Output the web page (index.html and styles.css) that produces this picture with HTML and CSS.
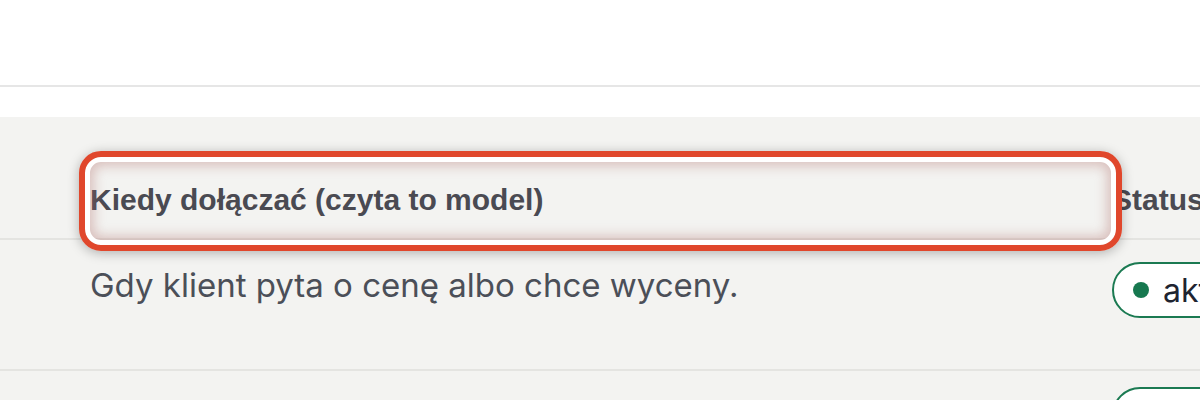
FILE: index.html
```html
<!DOCTYPE html>
<html lang="pl">
<head>
<meta charset="utf-8">
<title>Reguły</title>
<link rel="stylesheet" href="styles.css">
</head>
<body>
<div class="topbar"></div>
<div class="gap"></div>
<div class="table">
  <div class="row head">
    <div class="cell c1">Kiedy dołączać (czyta to model)</div>
    <div class="cell c2">Status</div>
  </div>
  <div class="row body r1">
    <div class="cell c1">Gdy klient pyta o cenę albo chce wyceny.</div>
    <div class="cell c2"><span class="pill"><span class="dot"></span>aktywny</span></div>
  </div>
  <div class="row body r2">
    <div class="cell c1">Ó</div>
    <div class="cell c2"><span class="pill"><span class="dot"></span>aktywny</span></div>
  </div>
  <div class="highlight"></div>
</div>
</body>
</html>
```
FILE: styles.css
```css
html, body {
  margin: 0;
  padding: 0;
  background: #ffffff;
  overflow: hidden;
  height: 400px;
}
body {
  font-family: Inter, "Noto Sans", sans-serif;
}
.topbar {
  height: 87px;
  border-bottom: 2px solid #e6e6e6;
  box-sizing: border-box;
}
.gap {
  height: 30px;
}
.table {
  position: relative;
  background: #f3f3f1;
}
.row {
  display: grid;
  grid-template-columns: 1112px 1fr;
  border-bottom: 2px solid #e4e4e1;
}
.c1 {
  padding-left: 90px;
}
.head {
  height: 121px;
  align-items: end;
}
.head .cell {
  font-family: "Liberation Sans", Arial, sans-serif;
  font-weight: 700;
  font-size: 30px;
  color: #4a4a52;
  padding-bottom: 21px;
  white-space: nowrap;
}
.body .cell {
  font-size: 33px;
  color: #4b4f58;
  white-space: nowrap;
}
.r1 {
  height: 131px;
  box-sizing: border-box;
  padding-top: 22px;
}
.r1 .c1 {
  padding-top: 3px;
}
.r2 {
  height: 80px;
  padding-top: 16px;
  border-bottom: none;
}
.r2 .c1 {
  padding-top: 26px;
  padding-left: 410px;
}
.pill {
  display: inline-flex;
  align-items: center;
  gap: 14px;
  height: 56px;
  box-sizing: border-box;
  padding: 0 24px 0 19px;
  border: 2px solid #1b7a52;
  border-radius: 28px;
  background: #ffffff;
  color: #1e2430;
  font-size: 32px;
}
.dot {
  width: 16px;
  height: 16px;
  border-radius: 50%;
  background: #17784f;
  flex: none;
}
.highlight {
  position: absolute;
  left: 79px;
  top: 34px;
  width: 1043px;
  height: 100px;
  box-sizing: border-box;
  border: 6px solid #e0472c;
  border-radius: 22px;
  box-shadow:
    0 2px 12px rgba(0, 0, 0, 0.28),
    inset 0 0 0 5px #ffffff,
    inset 0 0 12px 9px rgba(175, 110, 105, 0.38);
}
```
